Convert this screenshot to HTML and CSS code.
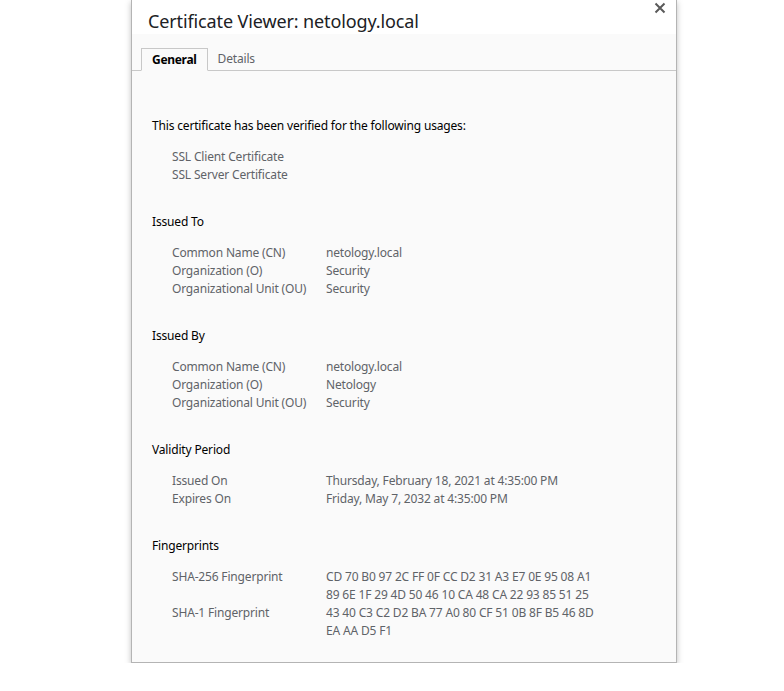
FILE: index.html
```html
<!DOCTYPE html>
<html>
<head>
<meta charset="utf-8">
<link rel="stylesheet" href="styles.css">
</head>
<body>
<div class="dialog">
  <div class="header">
    <div class="title">Certificate Viewer: netology.local</div>
    <svg class="close" width="12" height="12" viewBox="0 0 12 12"><path d="M1.5 1.5 L10.5 10.5 M10.5 1.5 L1.5 10.5" stroke="#5a5a5a" stroke-width="2"/></svg>
  </div>
  <div class="body">
    <div class="tabs">
      <div class="tab active">General</div>
      <div class="tab">Details</div>
    </div>
    <div class="content">
      <div class="section first">
        <div class="heading">This certificate has been verified for the following usages:</div>
        <div class="list">
          <div>SSL Client Certificate</div>
          <div>SSL Server Certificate</div>
        </div>
      </div>
      <div class="section">
        <div class="heading">Issued To</div>
        <div class="grid">
          <div>Common Name (CN)</div><div>netology.local</div>
          <div>Organization (O)</div><div>Security</div>
          <div>Organizational Unit (OU)</div><div>Security</div>
        </div>
      </div>
      <div class="section">
        <div class="heading">Issued By</div>
        <div class="grid">
          <div>Common Name (CN)</div><div>netology.local</div>
          <div>Organization (O)</div><div>Netology</div>
          <div>Organizational Unit (OU)</div><div>Security</div>
        </div>
      </div>
      <div class="section">
        <div class="heading">Validity Period</div>
        <div class="grid">
          <div>Issued On</div><div>Thursday, February 18, 2021 at 4:35:00 PM</div>
          <div>Expires On</div><div>Friday, May 7, 2032 at 4:35:00 PM</div>
        </div>
      </div>
      <div class="section">
        <div class="heading">Fingerprints</div>
        <div class="grid">
          <div>SHA-256 Fingerprint</div><div>CD 70 B0 97 2C FF 0F CC D2 31 A3 E7 0E 95 08 A1<br>89 6E 1F 29 4D 50 46 10 CA 48 CA 22 93 85 51 25</div>
          <div>SHA-1 Fingerprint</div><div>43 40 C3 C2 D2 BA 77 A0 80 CF 51 0B 8F B5 46 8D<br>EA AA D5 F1</div>
        </div>
      </div>
    </div>
  </div>
</div>
</body>
</html>
```

FILE: styles.css
```css
html, body {
  margin: 0;
  padding: 0;
  background: #ffffff;
}
body {
  font-family: "Noto Sans", "Open Sans", sans-serif;
  font-size: 12px;
  line-height: 18px;
  letter-spacing: -0.17px;
}
.dialog {
  margin-left: 131px;
  width: 544px;
  border: 1px solid #b4b4b4;
  border-top: none;
  box-shadow: 0 2px 6px rgba(0,0,0,0.25);
  background: #fafafa;
}
.header {
  height: 34px;
  background: #ffffff;
  position: relative;
}
.title {
  padding-left: 16px;
  padding-top: 9px;
  font-size: 18px;
  line-height: 24px;
  letter-spacing: -0.12px;
  color: #202124;
}
.close {
  position: absolute;
  right: 10px;
  top: 2px;
}
.body {
  background: #fafafa;
  padding-bottom: 22px;
}
.tabs {
  display: flex;
  padding-top: 14px;
  padding-left: 9px;
  border-bottom: 1px solid #c8c8c8;
  height: 22px;
}
.tab {
  padding: 0 10px;
  line-height: 21px;
  color: #5f6368;
  font-size: 12px;
}
.tab.active {
  border: 1px solid #c8c8c8;
  border-bottom: 1px solid #fafafa;
  background: #fafafa;
  font-weight: bold;
  color: #000;
  height: 21px;
  padding: 0 10px;
  letter-spacing: -0.3px;
}
.content {
  padding: 46px 20px 0 20px;
}
.section {
  margin-top: 29px;
}
.section.first {
  margin-top: 0;
}
.heading {
  color: #000;
}
.list, .grid {
  margin-top: 13px;
  padding-left: 20px;
  color: #5f6368;
}
.grid {
  display: grid;
  grid-template-columns: 154px auto;
}
```
